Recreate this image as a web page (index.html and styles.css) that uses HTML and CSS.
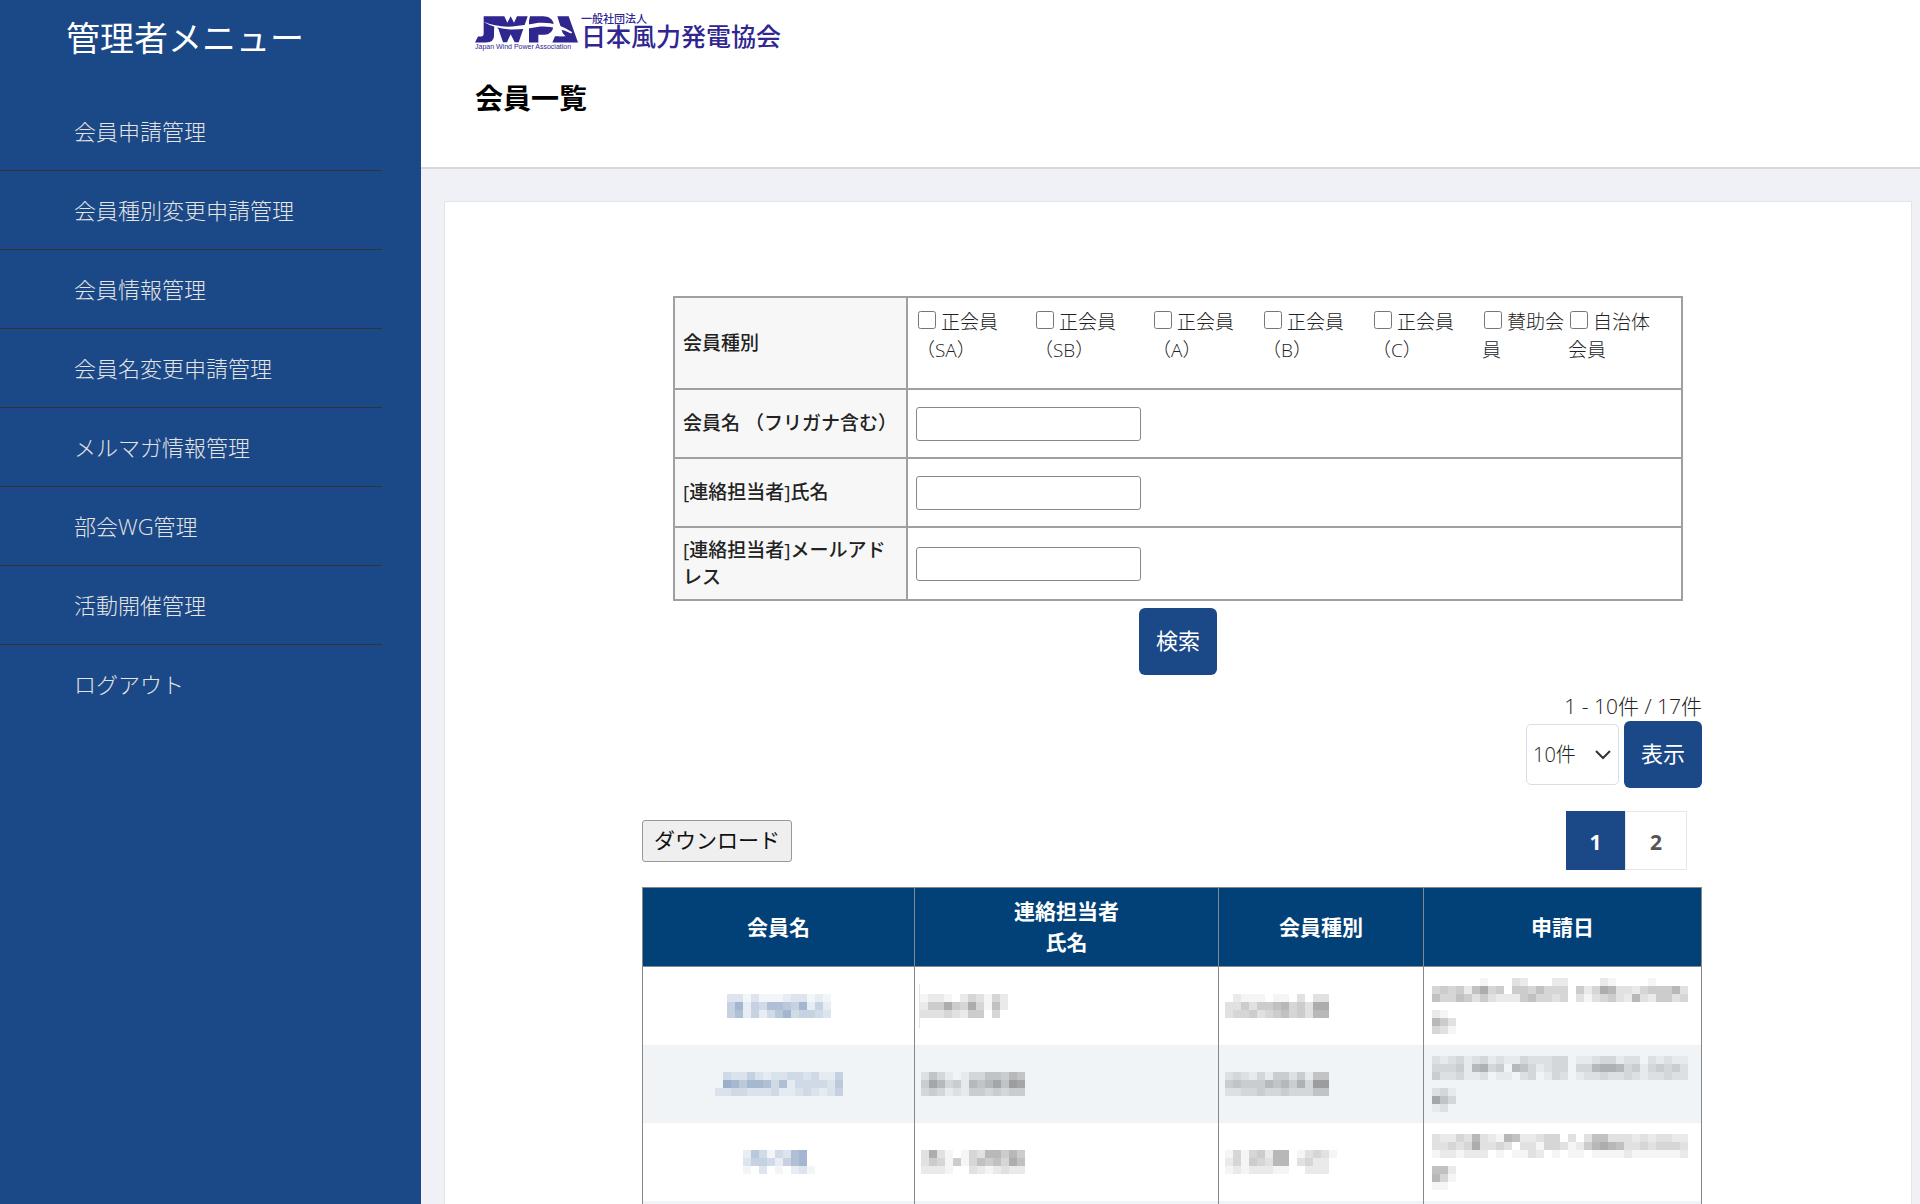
FILE: index.html
```html
<!DOCTYPE html>
<html lang="ja">
<head>
<meta charset="utf-8">
<title>会員一覧</title>
<link rel="stylesheet" href="styles.css">
</head>
<body>
<div class="layout">
  <aside class="sidebar">
    <p class="sidebar-title">管理者メニュー</p>
    <nav>
      <ul class="menu">
        <li><a href="#">会員申請管理</a></li>
        <li><a href="#">会員種別変更申請管理</a></li>
        <li><a href="#">会員情報管理</a></li>
        <li><a href="#">会員名変更申請管理</a></li>
        <li><a href="#">メルマガ情報管理</a></li>
        <li><a href="#">部会WG管理</a></li>
        <li><a href="#">活動開催管理</a></li>
        <li><a href="#">ログアウト</a></li>
      </ul>
    </nav>
  </aside>
  <div class="content">
    <header class="header">
      <a class="logo" href="#">
        <span class="logo-mark">
          <svg class="emblem" viewBox="0 0 312 80" aria-hidden="true">
            <path d="M26 0H58V56Q58 79 32 79H0L9 61H18Q26 61 26 52Z"/>
            <path d="M57 0H88L97 20L107 0L117 20L126 0H158L131 78H119L107 54L96 78H84L70 38H57Z"/>
            <path d="M165 0H206Q236 2 236 28Q232 56 208 56H190V79H162V14Z"/>
            <path d="M247 0H281L309 79H232L240 60H266Z"/>
            <path class="gap" d="M24 16Q66 34 112 31Q160 26 190 20Q244 16 292 48L288 52Q240 28 196 31Q150 40 112 40Q58 38 24 16Z"/>
            <path class="gap" d="M58 30H66L70 42L60 79H56Z"/>
            <path class="gap" d="M258 46L272 60H252Z"/>
          </svg>
          <span class="logo-en">Japan Wind Power Association</span>
        </span>
        <span class="logo-name">
          <span class="logo-kind">一般社団法人</span>
          <span class="logo-ja">日本風力発電協会</span>
        </span>
      </a>
      <h1 class="page-title">会員一覧</h1>
    </header>
    <main class="card">
      <form class="search">
        <table class="search-table">
          <tr class="types-row">
            <th>会員種別</th>
            <td>
              <div class="types">
                <label><input type="checkbox"> 正会員（SA）</label>
                <label><input type="checkbox"> 正会員（SB）</label>
                <label><input type="checkbox"> 正会員（A）</label>
                <label><input type="checkbox"> 正会員（B）</label>
                <label><input type="checkbox"> 正会員（C）</label>
                <label><input type="checkbox"> 賛助会員</label>
                <label><input type="checkbox"> 自治体会員</label>
              </div>
            </td>
          </tr>
          <tr>
            <th><label for="name">会員名 （フリガナ含む）</label></th>
            <td><input class="field" type="text" id="name"></td>
          </tr>
          <tr>
            <th><label for="contact">[連絡担当者]氏名</label></th>
            <td><input class="field" type="text" id="contact"></td>
          </tr>
          <tr class="mail-row">
            <th><label for="mail">[連絡担当者]メールアドレス</label></th>
            <td><input class="field" type="text" id="mail"></td>
          </tr>
        </table>
        <button class="btn" type="button">検索</button>
      </form>
      <section class="list">
        <p class="count">1 - 10件 / 17件</p>
        <div class="per-page">
          <select class="select" aria-label="表示件数"><option>10件</option></select>
          <button class="btn" type="button">表示</button>
        </div>
        <div class="tools">
          <button class="download" type="button">ダウンロード</button>
          <nav class="pager"><a class="current" href="#">1</a><a href="#">2</a></nav>
        </div>
        <table class="members">
          <colgroup><col class="c1"><col class="c2"><col class="c3"><col class="c4"></colgroup>
          <thead>
            <tr><th>会員名</th><th>連絡担当者<br>氏名</th><th>会員種別</th><th>申請日</th></tr>
          </thead>
          <tbody>
            <tr>
              <td><a href="#"><svg data-cells="3313111233121 5825477658252 5725246845543"></svg></a></td>
              <td class="barred"><svg data-cells="12210243142 25585484162 33343255040"></svg></td>
              <td><svg data-cells="0211101103033 3353556745388 3445345645377"></svg></td>
              <td><svg data-cells="00000010003200022000021000010000 45452684505546444052487332455573 64465353222564434031345327325534 0 21 753 431"></svg></td>
            </tr>
            <tr>
              <td><a href="#"><svg data-cells="0322421223323114 0875776361333325 2233222311232124"></svg></a></td>
              <td><svg data-cells="2531013355465 4863416568598 3431214434344"></svg></td>
              <td><svg data-cells="2321314424155 4544465647399 2233433433355"></svg></td>
              <td><svg data-cells="21231231211322233011233122021211 33341673406531233033677634134342 42231120110230132012232232122322 0 231 853 12"></svg></td>
            </tr>
            <tr>
              <td><a href="#"><svg data-cells="26414378 35542578 103010231"></svg></a></td>
              <td><svg data-cells="3831014377575 3541514656486 2221003212322"></svg></td>
              <td><svg data-cells="14145277013431 2415437703422 1212221100222"></svg></td>
              <td><svg data-cells="32243732176223440303663332323322 33434833430331443125787633434443 12212220101132010110111121111112 0 662 741 11"></svg></td>
            </tr>
            <tr><td></td><td></td><td></td><td></td></tr>
          </tbody>
        </table>
      </section>
    </main>
  </div>
</div>
<script src="script.js"></script>
</body>
</html>
```
FILE: script.js
```js
// Masked values: each digit is the darkness of one 8px cell.
document.querySelectorAll("svg[data-cells]").forEach(function (svg) {
  var size = 8;
  var rows = svg.dataset.cells.split(" ");
  var cols = Math.max.apply(null, rows.map(function (r) { return r.length; }));
  svg.setAttribute("width", cols * size);
  svg.setAttribute("height", rows.length * size);
  rows.forEach(function (row, y) {
    row.split("").forEach(function (level, x) {
      if (level === "0") return;
      var cell = document.createElementNS("http://www.w3.org/2000/svg", "rect");
      cell.setAttribute("x", x * size);
      cell.setAttribute("y", y * size);
      cell.setAttribute("width", size);
      cell.setAttribute("height", size);
      cell.setAttribute("fill-opacity", level / 20);
      svg.appendChild(cell);
    });
  });
});
```
FILE: styles.css
```css
* { box-sizing: border-box; }

body {
  margin: 0;
  height: 100vh;
  overflow: hidden;
  background: #f0f1f6;
  color: #222;
  font-family: "Open Sans", "Noto Sans CJK JP", sans-serif;
  font-size: 19px;
  font-weight: 300;
}

p, h1, ul { margin: 0; padding: 0; }
a { color: inherit; text-decoration: none; }
button, input, select { font-family: inherit; }

.layout { display: flex; height: 100vh; overflow: hidden; }

/* Sidebar */
.sidebar {
  flex: 0 0 421px;
  padding-right: 39px;
  background: #1b4887;
}
.sidebar-title {
  height: 92px;
  padding: 14px 0 0 66px;
  color: #fff;
  font-size: 34px;
  font-weight: 400;
  line-height: 48px;
}
.menu { list-style: none; }
.menu li + li { border-top: 1px solid #333; }
.menu a {
  display: block;
  padding-left: 74px;
  color: #e4e4e4;
  font-size: 22px;
  line-height: 78px;
}

/* Header */
.content { flex: 1; min-width: 0; }
.header {
  height: 169px;
  padding: 13px 54px 0;
  background: #fff;
  border-bottom: 2px solid #d8d8dc;
}
.logo { display: flex; gap: 2px; height: 36px; color: #2f2690; }
.logo-mark { width: 104px; padding-top: 3px; }
.emblem { display: block; width: 104px; height: 27px; fill: #2f2690; }
.emblem .gap { fill: #fff; }
.logo-en {
  display: block;
  font-family: "Liberation Sans", sans-serif;
  font-size: 7px;
  font-weight: 400;
  line-height: 7px;
  white-space: nowrap;
}
.logo-name { display: flex; flex-direction: column; font-weight: 500; }
.logo-kind { font-size: 11px; line-height: 11px; }
.logo-ja { font-size: 25px; line-height: 25px; }
.page-title {
  margin-top: 28px;
  color: #000;
  font-size: 28px;
  font-weight: 700;
  line-height: 42px;
}

/* Card */
.card {
  margin: 32px 8px 0 23px;
  padding-top: 94px;
  background: #fff;
  border: 1px solid #e4e4e8;
}
.search {
  display: flex;
  flex-direction: column;
  align-items: center;
  gap: 7px;
  padding: 0 228px;
}
.search-table { width: 100%; border-collapse: collapse; }
.search-table tr { height: 69px; }
.search-table .types-row { height: 92px; }
.search-table .mail-row { height: 73px; }
.search-table th,
.search-table td { border: 2px solid #a0a0a0; padding: 0 8px; }
.search-table th {
  width: 233px;
  background: #f7f7f7;
  font-weight: 500;
  line-height: 27px;
  text-align: left;
}
.types {
  display: grid;
  grid-template-columns: 118px 118px 110px 110px 110px 86px 86px;
  height: 90px;
  padding-top: 10px;
}
.types label { line-height: 28px; }
.types input { width: 18px; height: 18px; margin: 0 0 0 2px; }
.field {
  display: block;
  width: 225px;
  height: 34px;
  border: 1px solid #888;
  border-radius: 3px;
}

.btn {
  width: 78px;
  height: 67px;
  padding: 0 0 5px;
  border: 0;
  border-radius: 6px;
  background: #1b4887;
  color: #fff;
  font-size: 22px;
}

/* Result list */
.list { padding: 17px 209px 0 197px; }
.count { font-size: 21px; line-height: 29px; text-align: right; }
.per-page { display: flex; justify-content: flex-end; align-items: center; gap: 5px; }
.select {
  width: 93px;
  height: 61px;
  padding: 0 6px;
  appearance: none;
  border: 1px solid #d8dee6;
  border-radius: 5px;
  background: #fff url("data:image/svg+xml,%3Csvg xmlns='http://www.w3.org/2000/svg' width='16' height='10' fill='none' stroke='%23333' stroke-width='2'%3E%3Cpath d='M1 1l7 7 7-7'/%3E%3C/svg%3E") no-repeat right 7px center;
  color: #222;
  font-size: 20px;
  font-weight: 300;
}
.tools {
  display: flex;
  justify-content: space-between;
  align-items: center;
  margin: 23px 0 17px;
  padding-right: 15px;
}
.download {
  width: 150px;
  height: 42px;
  padding: 0 0 3px;
  border: 1px solid #999;
  border-radius: 3px;
  background: #efefef;
  color: #111;
  font-size: 21px;
}
.pager { display: flex; }
.pager a {
  width: 62px;
  height: 59px;
  border: 1px solid #e6e6ee;
  color: #555;
  font-size: 21px;
  font-weight: 700;
  line-height: 60px;
  text-align: center;
}
.pager .current { width: 59px; border-color: #1b4887; background: #1b4887; color: #fff; }

.members {
  width: 100%;
  table-layout: fixed;
  border-collapse: collapse;
  border: 1px solid #888;
}
.c1 { width: 272px; }
.c2 { width: 304px; }
.c3 { width: 205px; }
.members tr { height: 78px; }
.members th {
  height: 79px;
  padding: 0;
  border: 1px solid #888;
  background: #024178;
  color: #fff;
  font-size: 21px;
  font-weight: 700;
  line-height: 31px;
}
.members td { padding: 0 6px; border-left: 1px solid #888; }
.members td:first-child { text-align: center; }
.members td:last-child { padding-left: 8px; }
.members tbody tr:nth-child(even) { background: #f0f4f7; }
.members svg { display: block; fill: #333; }
.members a svg { margin: 0 auto; fill: #1b4887; }
.members .barred { padding-left: 4px; }
.barred svg { box-sizing: content-box; border-left: 1px solid #e4e4e4; padding: 10px 0; }
```
